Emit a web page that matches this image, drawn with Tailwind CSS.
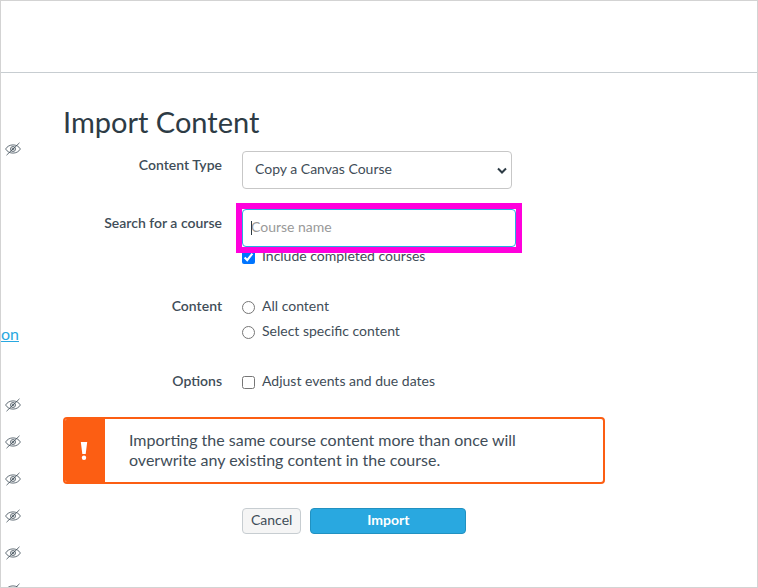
<!DOCTYPE html>
<html lang="en">
  <head>
    <meta charset="UTF-8" />
    <meta name="viewport" content="width=device-width, initial-scale=1.0" />
    <title>Import Content</title>
    <script src="https://cdn.jsdelivr.net/npm/@tailwindcss/browser@4"></script>
  </head>
  <body class="bg-white font-['Lato',sans-serif] text-sm text-[#3f4d58]">
    <!-- Shared icon for hidden navigation items -->
    <svg class="hidden">
      <symbol id="hidden-eye" viewBox="0 0 16 14">
        <g fill="none" stroke="currentColor" stroke-width="0.8">
          <path d="M0.6 7C2.3 4.2 5 2.9 8 2.9S13.7 4.2 15.4 7C13.7 9.8 11 11.1 8 11.1S2.3 9.8 0.6 7Z" />
          <circle cx="8" cy="7" r="2.5" />
          <circle cx="8" cy="7" r="0.9" />
          <path d="M1.5 13.2L14.5 0.8" />
        </g>
      </symbol>
    </svg>

    <div class="flex h-screen flex-col overflow-hidden border border-[#d3d3d3]">
      <header class="h-18 shrink-0 border-b border-[#c7cdd1]"></header>

      <div class="flex min-h-0 flex-1">
        <!-- Course navigation -->
        <nav class="w-[62px] shrink-0 overflow-hidden">
          <ul class="pt-[57px]">
            <li class="flex h-[37px] items-center pl-1">
              <svg class="h-3.5 w-4"><use href="#hidden-eye" /></svg>
            </li>
            <li class="mt-[155px] h-6 text-base leading-6">
              <a href="#" class="text-[#29a8e0] underline">on</a>
            </li>
            <li class="mt-10 flex h-[37px] items-center pl-1">
              <svg class="h-3.5 w-4"><use href="#hidden-eye" /></svg>
            </li>
            <li class="flex h-[37px] items-center pl-1">
              <svg class="h-3.5 w-4"><use href="#hidden-eye" /></svg>
            </li>
            <li class="flex h-[37px] items-center pl-1">
              <svg class="h-3.5 w-4"><use href="#hidden-eye" /></svg>
            </li>
            <li class="flex h-[37px] items-center pl-1">
              <svg class="h-3.5 w-4"><use href="#hidden-eye" /></svg>
            </li>
            <li class="flex h-[37px] items-center pl-1">
              <svg class="h-3.5 w-4"><use href="#hidden-eye" /></svg>
            </li>
            <li class="flex h-[37px] items-center pl-1">
              <svg class="h-3.5 w-4"><use href="#hidden-eye" /></svg>
            </li>
          </ul>
        </nav>

        <main class="flex-1 pt-[31px]">
          <h1 class="mb-[11px] text-[29px] leading-9 text-[#2d3b45]">Import Content</h1>

          <form class="max-w-[542px]">
            <div class="grid grid-cols-[159px_1fr] gap-x-5">
              <label for="contentType" class="pt-1 text-right font-semibold leading-5">Content Type</label>
              <div class="relative w-[270px]">
                <select
                  id="contentType"
                  class="h-[38px] w-full appearance-none rounded-sm border border-[#c7c7c7] bg-white px-3 pb-0.5"
                >
                  <option>Copy a Canvas Course</option>
                </select>
                <svg class="pointer-events-none absolute right-1 top-4 h-2 w-3" viewBox="0 0 12 8">
                  <path d="M2 1.5L6 5.5L10 1.5" fill="none" stroke="#2d3b45" stroke-width="2" />
                </svg>
              </div>
            </div>

            <div class="mt-5 grid grid-cols-[159px_1fr] gap-x-5">
              <label for="courseSearch" class="pt-1 text-right font-semibold leading-5">Search for a course</label>
              <div>
                <div class="relative z-10 w-[274px] bg-white ring-6 ring-[#ff00dc]">
                  <input
                    type="text"
                    id="courseSearch"
                    placeholder="Course name"
                    class="block h-[38px] w-full rounded-sm border border-[#29abe2] px-2 pb-1 outline-none placeholder:text-[#999999]"
                  />
                  <span class="absolute left-[9px] top-3 h-3.5 w-px bg-[#2d3b45]"></span>
                </div>
                <label class="flex h-[18px] items-center gap-[7px] leading-5">
                  <input type="checkbox" class="mt-0.5 size-[13px]" checked />
                  Include completed courses
                </label>
              </div>
            </div>

            <fieldset class="mt-[31px] grid grid-cols-[159px_1fr] gap-x-5">
              <span class="text-right font-semibold leading-5">Content</span>
              <div class="flex flex-col items-start gap-[5px]">
                <label class="flex items-center gap-[7px] leading-5">
                  <input type="radio" name="content" class="mt-0.5 size-[13px]" />
                  All content
                </label>
                <label class="flex items-center gap-[7px] leading-5">
                  <input type="radio" name="content" class="mt-0.5 size-[13px]" />
                  Select specific content
                </label>
              </div>
            </fieldset>

            <fieldset class="mt-[30px] grid grid-cols-[159px_1fr] gap-x-5">
              <span class="text-right font-semibold leading-5">Options</span>
              <label class="flex items-center gap-[7px] leading-5">
                <input type="checkbox" class="mt-0.5 size-[13px]" />
                Adjust events and due dates
              </label>
            </fieldset>

            <!-- Warning -->
            <div class="mt-[26px] flex overflow-hidden rounded-sm border-2 border-[#fc5e13]" role="alert">
              <div class="flex w-10 shrink-0 items-center justify-center bg-[#fc5e13] pr-0.5">
                <svg class="h-[18px] w-2" viewBox="0 0 8 18" fill="#ffffff">
                  <path d="M0.8 0H7.2L5.7 12H2.3Z" />
                  <circle cx="4" cy="15.7" r="2.2" />
                </svg>
              </div>
              <p class="pb-3 pl-6 pr-16 pt-[11px] text-base leading-5">
                Importing the same course content more than once will overwrite any existing content in the course.
              </p>
            </div>

            <div class="mt-6 flex gap-[9px] pl-[179px]">
              <button type="button" class="h-[26px] rounded-sm border border-[#c7cdd1] bg-[#f5f5f5] px-2 pb-0.5">
                Cancel
              </button>
              <button
                type="submit"
                class="h-[26px] w-[156px] rounded-sm border border-[#2191c1] bg-[#29a8e0] pb-0.5 font-bold text-white"
              >
                Import
              </button>
            </div>
          </form>
        </main>
      </div>
    </div>
  </body>
</html>
